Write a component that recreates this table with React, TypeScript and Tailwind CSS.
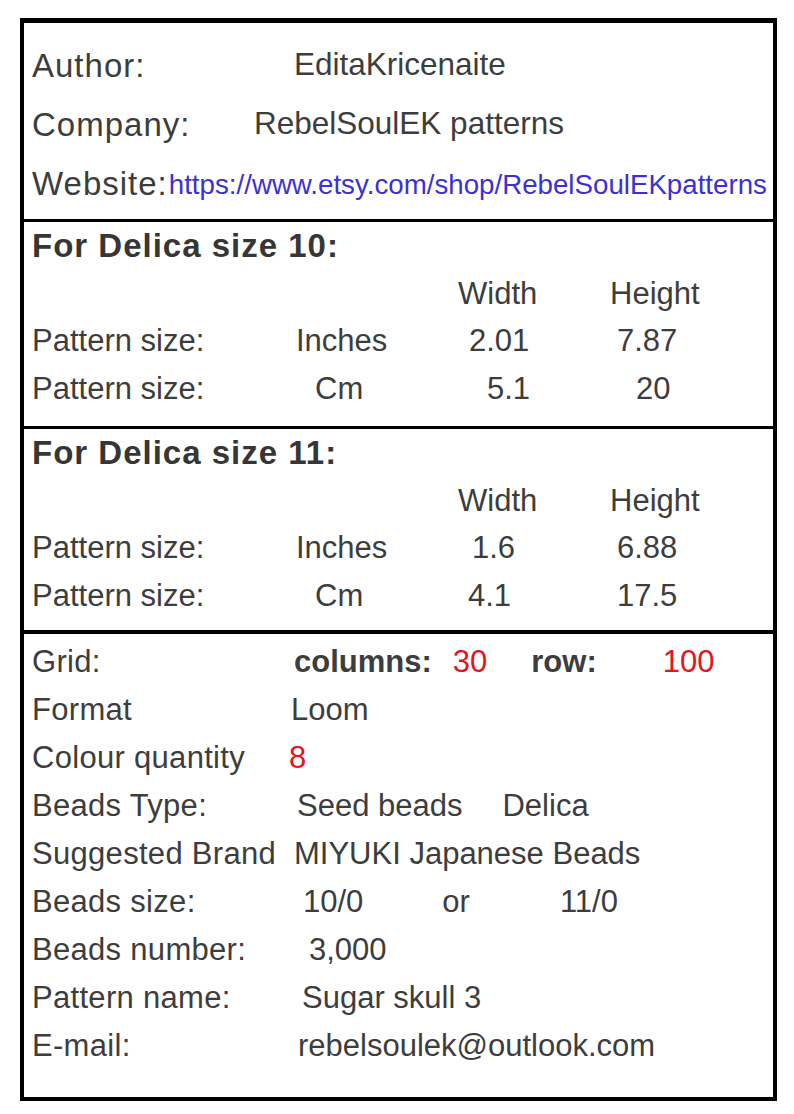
const textCls = "text-[#3d3d3d]";

function InfoRow({ label, labelW, children }: { label: string; labelW: string; children: React.ReactNode }) {
  return (
    <div className="flex h-[59px] items-center whitespace-nowrap">
      <span className={`${labelW} shrink-0 text-[33px] tracking-[1px]`}>{label}</span>
      {children}
    </div>
  );
}

type SizeRow = { unit: string; unitPad: string; w: string; wPad: string; h: string; hPad: string };

function SizeSection({ title, rows, last }: { title: string; rows: SizeRow[]; last: string }) {
  return (
    <div className={`px-2 ${last}`}>
      <div className="flex h-[47.5px] items-center text-[33px] font-bold tracking-[1px] text-[#363636]">
        {title}
      </div>
      <div className="grid h-[47.5px] grid-cols-[264px_162px_152px_1fr] items-center text-[31px]">
        <span />
        <span />
        <span>Width</span>
        <span>Height</span>
      </div>
      {rows.map((r) => (
        <div
          key={r.unit}
          className="grid h-[47.5px] grid-cols-[264px_162px_152px_1fr] items-center text-[31px]"
        >
          <span>Pattern size:</span>
          <span className={r.unitPad}>{r.unit}</span>
          <span className={r.wPad}>{r.w}</span>
          <span className={r.hPad}>{r.h}</span>
        </div>
      ))}
    </div>
  );
}

function Row({ label, children }: { label: string; children: React.ReactNode }) {
  return (
    <div className="flex h-[47.9px] items-center whitespace-nowrap text-[31px]">
      <span className="w-[258px] shrink-0 tracking-[0.3px]">{label}</span>
      {children}
    </div>
  );
}

export default function App() {
  return (
    <div
      className={`min-h-[1114px] bg-white pt-[18px] pl-[20px] ${textCls}`}
      style={{ fontFamily: "'Liberation Sans', Arial, sans-serif" }}
    >
      <div className="flex h-[1083px] w-[757px] flex-col border-x-4 border-t-[5px] border-b-4 border-black leading-none">
        {/* author info */}
        <div className="px-2 pt-[12.5px] pb-[6.5px]">
          <InfoRow label="Author:" labelW="w-[262px]">
            <span className="text-[31.5px]">EditaKricenaite</span>
          </InfoRow>
          <InfoRow label="Company:" labelW="w-[222px]">
            <span className="text-[31.5px]">RebelSoulEK patterns</span>
          </InfoRow>
          <InfoRow label="Website:" labelW="">
            <span className="ml-[1px] pt-[4px] text-[27.7px] text-[#3b31d6]">
              https://www.etsy.com/shop/RebelSoulEKpatterns
            </span>
          </InfoRow>
        </div>

        <div className="border-t-[3px] border-black" />
        <SizeSection
          title="For Delica size 10:"
          last="pb-[14px]"
          rows={[
            { unit: "Inches", unitPad: "", w: "2.01", wPad: "pl-[11px]", h: "7.87", hPad: "pl-[7px]" },
            { unit: "Cm", unitPad: "pl-[19px]", w: "5.1", wPad: "pl-[29px]", h: "20", hPad: "pl-[26px]" },
          ]}
        />

        <div className="border-t-[3px] border-black" />
        <SizeSection
          title="For Delica size 11:"
          last="pb-[11px]"
          rows={[
            { unit: "Inches", unitPad: "", w: "1.6", wPad: "pl-[14px]", h: "6.88", hPad: "pl-[7px]" },
            { unit: "Cm", unitPad: "pl-[19px]", w: "4.1", wPad: "pl-[10px]", h: "17.5", hPad: "pl-[7px]" },
          ]}
        />

        <div className="border-t-4 border-black" />
        <div className="px-2 pt-[4px]">
          <Row label="Grid:">
            <span className="ml-[4px] font-bold">columns:</span>
            <span className="ml-[21px] text-[#e3141c]">30</span>
            <span className="ml-[44px] font-bold">row:</span>
            <span className="ml-[66px] text-[#e3141c]">100</span>
          </Row>
          <Row label="Format">
            <span className="ml-[1px]">Loom</span>
          </Row>
          <Row label="Colour quantity">
            <span className="-ml-[1px] text-[#e3141c]">8</span>
          </Row>
          <Row label="Beads Type:">
            <span className="ml-[7px]">Seed beads</span>
            <span className="ml-[40px]">Delica</span>
          </Row>
          <Row label="Suggested Brand">
            <span className="ml-[4px]">MIYUKI Japanese Beads</span>
          </Row>
          <Row label="Beads size:">
            <span className="ml-[13px]">10/0</span>
            <span className="ml-[79px]">or</span>
            <span className="ml-[90px]">11/0</span>
          </Row>
          <Row label="Beads number:">
            <span className="ml-[19px]">3,000</span>
          </Row>
          <Row label="Pattern name:">
            <span className="ml-[12px]">Sugar skull 3</span>
          </Row>
          <Row label="E-mail:">
            <span className="ml-[8px]">rebelsoulek@outlook.com</span>
          </Row>
        </div>
      </div>
    </div>
  );
}
